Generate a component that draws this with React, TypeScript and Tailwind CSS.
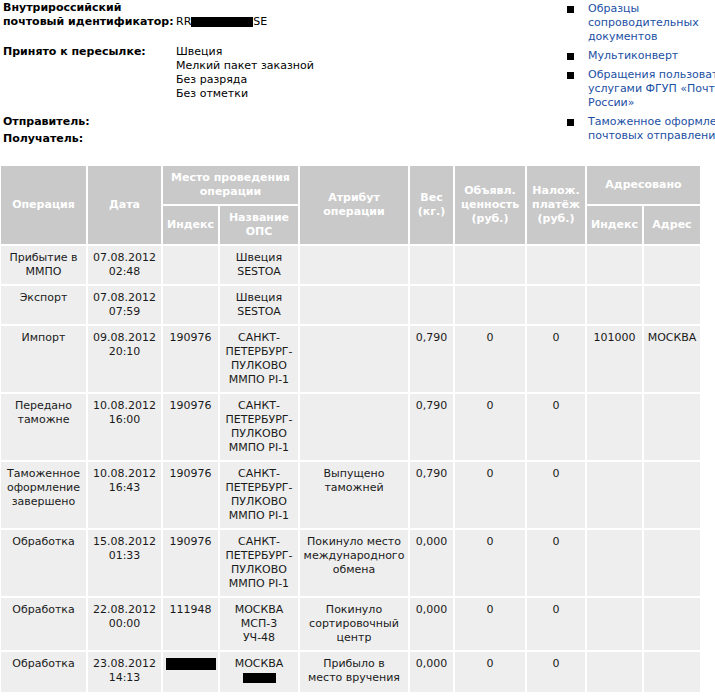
import React from "react";

type Row = {
  op: string[];
  date: string[];
  idx: React.ReactNode;
  name: React.ReactNode[];
  attr: string[];
  w: string;
  v: string;
  n: string;
  ai: string;
  aa: string;
};

const SPB = ["САНКТ-", "ПЕТЕРБУРГ-", "ПУЛКОВО", "ММПО PI-1"];

const rows: Row[] = [
  { op: ["Прибытие в", "ММПО"], date: ["07.08.2012", "02:48"], idx: "", name: ["Швеция", "SESTOA"], attr: [], w: "", v: "", n: "", ai: "", aa: "" },
  { op: ["Экспорт"], date: ["07.08.2012", "07:59"], idx: "", name: ["Швеция", "SESTOA"], attr: [], w: "", v: "", n: "", ai: "", aa: "" },
  { op: ["Импорт"], date: ["09.08.2012", "20:10"], idx: "190976", name: SPB, attr: [], w: "0,790", v: "0", n: "0", ai: "101000", aa: "МОСКВА" },
  { op: ["Передано", "таможне"], date: ["10.08.2012", "16:00"], idx: "190976", name: SPB, attr: [], w: "0,790", v: "0", n: "0", ai: "", aa: "" },
  { op: ["Таможенное", "оформление", "завершено"], date: ["10.08.2012", "16:43"], idx: "190976", name: SPB, attr: ["Выпущено", "таможней"], w: "0,790", v: "0", n: "0", ai: "", aa: "" },
  { op: ["Обработка"], date: ["15.08.2012", "01:33"], idx: "190976", name: SPB, attr: ["Покинуло место", "международного", "обмена"], w: "0,000", v: "0", n: "0", ai: "", aa: "" },
  { op: ["Обработка"], date: ["22.08.2012", "00:00"], idx: "111948", name: ["МОСКВА", "МСП-3", "УЧ-48"], attr: ["Покинуло", "сортировочный", "центр"], w: "0,000", v: "0", n: "0", ai: "", aa: "" },
  {
    op: ["Обработка"],
    date: ["23.08.2012", "14:13"],
    idx: <span className="inline-block w-[50px] h-[12px] bg-black mt-[1px]" />,
    name: ["МОСКВА", <span key="b" className="inline-block w-[33px] h-[10px] bg-black mt-[2px]" />],
    attr: ["Прибыло в", "место вручения"],
    w: "0,000", v: "0", n: "0", ai: "", aa: "",
  },
];

function Lines({ items }: { items: React.ReactNode[] }) {
  return (
    <>
      {items.map((t, i) => (
        <div key={i}>{t}</div>
      ))}
    </>
  );
}

const links = [
  ["Образцы", "сопроводительных", "документов"],
  ["Мультиконверт"],
  ["Обращения пользователей", "услугами ФГУП «Почта", "России»"],
  ["Таможенное оформление", "почтовых отправлений"],
];

export default function App() {
  const th = "bg-[#c9c9c9] text-white font-bold text-center align-middle px-[2px]";
  const td = "bg-[#eeeeee] text-[#1a1a1a] text-center align-top py-[5px] px-[2px] whitespace-nowrap";
  return (
    <div
      className="w-[715px] h-[698px] overflow-hidden bg-white text-[11px] leading-[14px] text-black"
      style={{ fontFamily: '"DejaVu Sans", Verdana, sans-serif' }}
    >
      <div className="flex">
        <div className="w-[562px] shrink-0 pl-[3px] pt-[1px]">
          <div className="grid grid-cols-[173px_1fr]">
            <div className="font-bold">
              Внутрироссийский
              <br />
              почтовый идентификатор:
            </div>
            <div className="self-end flex items-center whitespace-nowrap">
              RR
              <span className="inline-block w-[62px] h-[10px] bg-black" />
              SE
            </div>
            <div className="font-bold mt-[16px]">Принято к пересылке:</div>
            <div className="mt-[16px]">
              <div>Швеция</div>
              <div>Мелкий пакет заказной</div>
              <div>Без разряда</div>
              <div>Без отметки</div>
            </div>
            <div className="font-bold mt-[14px] col-span-2">Отправитель:</div>
            <div className="font-bold mt-[3px] col-span-2">Получатель:</div>
          </div>
        </div>
        <ul className="w-[170px] shrink-0 pt-[2px]">
          {links.map((l, i) => (
            <li key={i} className="flex mb-[5px]">
              <span className="w-[7px] h-[7px] bg-black mt-[4px] ml-[5px] mr-[14px] shrink-0" />
              <span className="text-[#1b50a3] whitespace-nowrap">
                <Lines items={l} />
              </span>
            </li>
          ))}
        </ul>
      </div>

      <table className="table-fixed border-separate border-spacing-[2px] mt-[16px] -ml-px">
        <colgroup>
          <col className="w-[85px]" />
          <col className="w-[73px]" />
          <col className="w-[55px]" />
          <col className="w-[78px]" />
          <col className="w-[108px]" />
          <col className="w-[43px]" />
          <col className="w-[70px]" />
          <col className="w-[58px]" />
          <col className="w-[55px]" />
          <col className="w-[56px]" />
        </colgroup>
        <thead>
          <tr className="h-[38px]">
            <th rowSpan={2} className={th}>Операция</th>
            <th rowSpan={2} className={th}>Дата</th>
            <th colSpan={2} className={th}>
              Место проведения
              <br />
              операции
            </th>
            <th rowSpan={2} className={th}>
              Атрибут
              <br />
              операции
            </th>
            <th rowSpan={2} className={th}>
              Вес
              <br />
              (кг.)
            </th>
            <th rowSpan={2} className={th}>
              Объявл.
              <br />
              ценность
              <br />
              (руб.)
            </th>
            <th rowSpan={2} className={th}>
              Налож.
              <br />
              платёж
              <br />
              (руб.)
            </th>
            <th colSpan={2} className={th}>Адресовано</th>
          </tr>
          <tr className="h-[38px]">
            <th className={th}>Индекс</th>
            <th className={th}>
              Название
              <br />
              ОПС
            </th>
            <th className={th}>Индекс</th>
            <th className={th}>Адрес</th>
          </tr>
        </thead>
        <tbody>
          {rows.map((r, i) => (
            <tr key={i}>
              <td className={td}><Lines items={r.op} /></td>
              <td className={td}><Lines items={r.date} /></td>
              <td className={td}>{r.idx}</td>
              <td className={td}><Lines items={r.name} /></td>
              <td className={td}><Lines items={r.attr} /></td>
              <td className={td}>{r.w}</td>
              <td className={td}>{r.v}</td>
              <td className={td}>{r.n}</td>
              <td className={td}>{r.ai}</td>
              <td className={td}>{r.aa}</td>
            </tr>
          ))}
        </tbody>
      </table>
    </div>
  );
}
